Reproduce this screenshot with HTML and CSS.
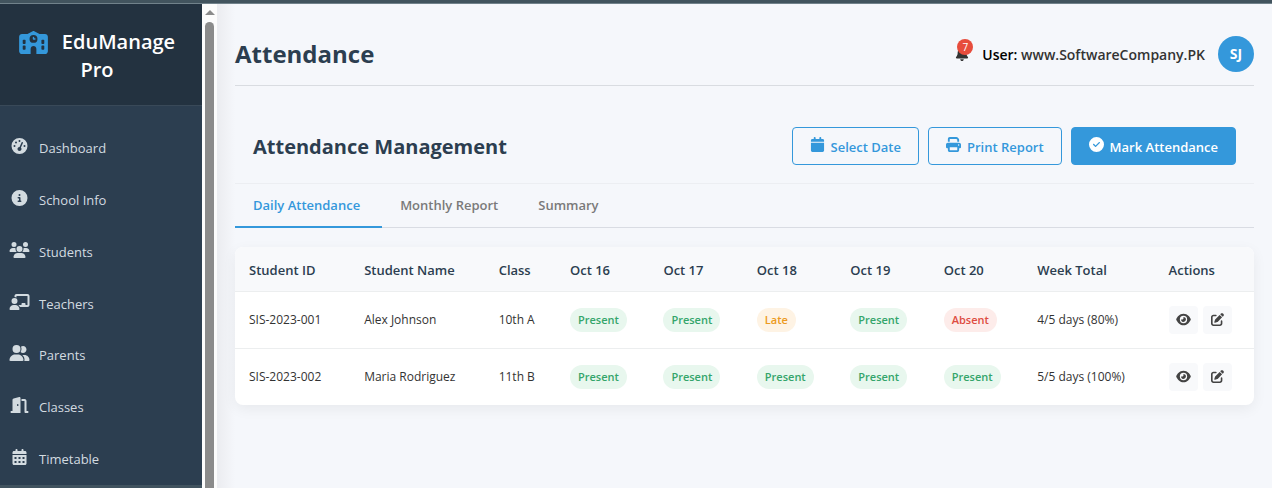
FILE: index.html
```html
<!DOCTYPE html>
<html lang="en">
<head>
<meta charset="utf-8">
<meta name="viewport" content="width=device-width, initial-scale=1">
<title>EduManage Pro - Attendance</title>
<link rel="stylesheet" href="styles.css">
</head>
<body>
<svg class="sprite" aria-hidden="true">
  <symbol id="i-school" viewBox="0 0 640 512"><path fill-rule="evenodd" d="M337.8 5.400C327-1.800 313-1.800 302.200 5.400L186 64H64C29 64 0 93 0 128V448c0 35 29 64 64 64H256V400c0-35.300 28.700-64 64-64s64 28.700 64 64V512H576c35 0 64-29 64-64V128c0-35-29-64-64-64H454L337.800 5.400zM96 192h32c8.800 0 16 7.200 16 16v64c0 8.800-7.200 16-16 16H96c-8.800 0-16-7.200-16-16V208c0-8.800 7.200-16 16-16zM512 192h32c8.800 0 16 7.200 16 16v64c0 8.800-7.200 16-16 16H512c-8.800 0-16-7.200-16-16V208c0-8.800 7.200-16 16-16zM96 320h32c8.800 0 16 7.200 16 16v64c0 8.800-7.200 16-16 16H96c-8.800 0-16-7.200-16-16V336c0-8.800 7.200-16 16-16zM512 320h32c8.800 0 16 7.200 16 16v64c0 8.800-7.200 16-16 16H512c-8.800 0-16-7.200-16-16V336c0-8.800 7.200-16 16-16zM232 176a88 88 0 1 1 176 0 88 88 0 1 1-176 0zm88-48c-8.800 0-16 7.200-16 16v32c0 8.800 7.200 16 16 16h32c8.800 0 16-7.200 16-16s-7.200-16-16-16H336V144c0-8.800-7.200-16-16-16z"/></symbol>
  <symbol id="i-gauge" viewBox="0 0 512 512"><path fill-rule="evenodd" d="M0 256a256 256 0 1 1 512 0A256 256 0 1 1 0 256zM256 64a32 32 0 1 1 0 64 32 32 0 1 1 0-64zM144 112a32 32 0 1 1 0 64 32 32 0 1 1 0-64zM96 224a32 32 0 1 1 0 64 32 32 0 1 1 0-64zM416 224a32 32 0 1 1 0 64 32 32 0 1 1 0-64zM256 416c35.300 0 64-28.700 64-64 0-17.400-6.900-33.100-18.100-44.600L366 161.700c5.300-12.100-.2-26.300-12.300-31.600s-26.300.2-31.600 12.300L257.900 288H256c-35.300 0-64 28.700-64 64s28.700 64 64 64z"/></symbol>
  <symbol id="i-info" viewBox="0 0 512 512"><path fill-rule="evenodd" d="M256 512A256 256 0 1 0 256 0a256 256 0 1 0 0 512zM216 336h24V272H216c-13.300 0-24-10.700-24-24s10.700-24 24-24h48c13.300 0 24 10.700 24 24v88h8c13.300 0 24 10.700 24 24s-10.700 24-24 24H216c-13.300 0-24-10.700-24-24s10.700-24 24-24zm40-208a32 32 0 1 1 0 64 32 32 0 1 1 0-64z"/></symbol>
  <symbol id="i-users" viewBox="0 0 640 512"><path d="M144 0a80 80 0 1 1 0 160A80 80 0 1 1 144 0zM512 0a80 80 0 1 1 0 160A80 80 0 1 1 512 0zM0 298.700C0 239.800 47.800 192 106.700 192h42.700c15.900 0 31 3.500 44.600 9.700c-1.300 7.200-1.900 14.700-1.900 22.300c0 38.200 16.800 72.500 43.300 96H21.300C9.600 320 0 310.400 0 298.700zM405.300 320h-.7c26.600-23.500 43.300-57.800 43.300-96c0-7.600-.7-15-1.900-22.300c13.600-6.300 28.700-9.700 44.600-9.700h42.700C592.200 192 640 239.800 640 298.700c0 11.800-9.600 21.300-21.300 21.300H405.300zM224 224a96 96 0 1 1 192 0 96 96 0 1 1-192 0zM128 485.300C128 411.700 187.700 352 261.300 352H378.700C452.300 352 512 411.700 512 485.300c0 14.700-11.900 26.700-26.700 26.700H154.700c-14.700 0-26.700-11.900-26.700-26.700z"/></symbol>
  <symbol id="i-teacher" viewBox="0 0 640 512"><path d="M160 64c0-35.300 28.700-64 64-64H576c35.300 0 64 28.700 64 64V352c0 35.300-28.700 64-64 64H336.800c-11.800-25.500-29.900-47.500-52.400-64H384V320c0-17.700 14.300-32 32-32h64c17.700 0 32 14.300 32 32v32h64V64H224v49.100C205.200 102.200 183.300 96 160 96V64zm0 64a96 96 0 1 1 0 192 96 96 0 1 1 0-192zM133.300 352h53.300C260.300 352 320 411.700 320 485.300c0 14.700-11.900 26.700-26.700 26.700H26.700C11.900 512 0 500.100 0 485.300C0 411.700 59.700 352 133.300 352z"/></symbol>
  <symbol id="i-parents" viewBox="0 0 640 512"><path d="M96 128a128 128 0 1 1 256 0A128 128 0 1 1 96 128zM0 482.300C0 383.800 79.800 304 178.300 304h91.400C368.200 304 448 383.800 448 482.300c0 16.400-13.300 29.700-29.700 29.700H29.700C13.300 512 0 498.700 0 482.300zM609.300 512H471.400c5.400-9.400 8.600-20.300 8.600-32v-8c0-60.700-27.100-115.200-69.800-151.800c2.400-.1 4.700-.2 7.100-.2h61.400C567.800 320 640 392.200 640 481.300c0 17-13.800 30.700-30.700 30.700zM432 256c-31 0-59-12.600-79.300-32.900C372.400 196.500 384 163.600 384 128c0-26.800-6.600-52.100-18.300-74.300C384.300 40.100 407.200 32 432 32c61.900 0 112 50.100 112 112s-50.100 112-112 112z"/></symbol>
  <symbol id="i-door" viewBox="0 0 576 512"><path fill-rule="evenodd" d="M320 32c0-9.900-4.500-19.200-12.300-25.200S289.800-1.400 280.200 1l-179.900 45C79 51.300 64 70.500 64 92.500V448H32c-17.700 0-32 14.300-32 32s14.300 32 32 32H320V32zM256 256c0 17.700-10.700 32-24 32s-24-14.300-24-32s10.700-32 24-32s24 14.300 24 32zM352 64v64h96V480c0 17.700 14.300 32 32 32h64c17.700 0 32-14.300 32-32s-14.300-32-32-32H512V128c0-35.300-28.700-64-64-64H352z"/></symbol>
  <symbol id="i-days" viewBox="0 0 448 512"><path fill-rule="evenodd" d="M96 32V64H48C21.500 64 0 85.500 0 112v48H448V112c0-26.500-21.500-48-48-48H352V32c0-17.700-14.300-32-32-32s-32 14.300-32 32V64H160V32c0-17.700-14.300-32-32-32S96 14.300 96 32zM448 192H0V464c0 26.500 21.500 48 48 48H400c26.500 0 48-21.500 48-48V192zM64 256h64v64H64zM192 256h64v64h-64zM320 256h64v64h-64zM64 384h64v64H64zM192 384h64v64h-64zM320 384h64v64h-64z"/></symbol>
  <symbol id="i-calendar" viewBox="0 0 448 512"><path d="M96 32V64H48C21.500 64 0 85.500 0 112v48H448V112c0-26.500-21.500-48-48-48H352V32c0-17.700-14.300-32-32-32s-32 14.300-32 32V64H160V32c0-17.700-14.300-32-32-32S96 14.300 96 32zM448 192H0V464c0 26.500 21.500 48 48 48H400c26.500 0 48-21.500 48-48V192z"/></symbol>
  <symbol id="i-print" viewBox="0 0 512 512"><path fill-rule="evenodd" d="M128 0C92.700 0 64 28.700 64 64v96h64V64H354.700L384 93.300V160h64V93.300c0-17-6.700-33.300-18.700-45.300L400 18.700C388 6.700 371.700 0 354.700 0H128zM384 352v96H128V352H384zm64 32h32c17.700 0 32-14.300 32-32V256c0-35.300-28.700-64-64-64H64c-35.300 0-64 28.700-64 64v96c0 17.700 14.300 32 32 32H64v64c0 35.300 28.700 64 64 64H384c35.300 0 64-28.700 64-64V384zM432 248a24 24 0 1 1 0 48 24 24 0 1 1 0-48z"/></symbol>
  <symbol id="i-check" viewBox="0 0 512 512"><path fill-rule="evenodd" d="M256 512A256 256 0 1 0 256 0a256 256 0 1 0 0 512zM369 209L241 337c-9.400 9.400-24.600 9.400-33.900 0l-64-64c-9.400-9.400-9.400-24.600 0-33.900s24.600-9.400 33.900 0l47 47L335 175c9.400-9.400 24.600-9.400 33.900 0s9.400 24.600 0 33.900z"/></symbol>
  <symbol id="i-bell" viewBox="0 0 448 512"><path d="M224 0c-17.700 0-32 14.300-32 32V51.200C119 66 64 130.600 64 208v18.800c0 47-17.300 92.400-48.500 127.600l-7.400 8.300c-8.400 9.400-10.400 22.900-5.300 34.400S19.400 416 32 416H416c12.600 0 24-7.400 29.200-18.900s3.100-25-5.300-34.400l-7.400-8.300C401.300 319.200 384 273.900 384 226.800V208c0-77.400-55-142-128-156.800V32c0-17.700-14.300-32-32-32zm45.300 493.300c12-12 18.700-28.300 18.700-45.300H160c0 17 6.700 33.300 18.700 45.300s28.300 18.700 45.300 18.700s33.300-6.700 45.300-18.700z"/></symbol>
  <symbol id="i-eye" viewBox="0 0 576 512"><path fill-rule="evenodd" d="M288 32c-80.800 0-145.500 36.800-192.600 80.600C48.600 156 17.300 208 2.500 243.700c-3.300 7.900-3.300 16.700 0 24.600C17.300 304 48.600 356 95.400 399.400C142.500 443.200 207.200 480 288 480s145.500-36.800 192.600-80.600c46.800-43.500 78.100-95.400 93-131.100c3.300-7.900 3.300-16.700 0-24.600c-14.900-35.700-46.200-87.700-93-131.100C433.500 68.800 368.800 32 288 32zM144 256a144 144 0 1 1 288 0 144 144 0 1 1-288 0zm144-64c0 35.300-28.700 64-64 64c-7.100 0-13.900-1.200-20.300-3.300c-5.500-1.800-11.900 1.600-11.700 7.400c.3 6.900 1.300 13.800 3.200 20.700c13.700 51.200 66.400 81.600 117.600 67.900s81.600-66.400 67.900-117.600c-11.100-41.500-47.800-69.400-88.600-71.100c-5.800-.2-9.200 6.100-7.400 11.700c2.100 6.400 3.300 13.200 3.300 20.300z"/></symbol>
  <symbol id="i-edit" viewBox="0 0 512 512"><path d="M471.600 21.700c-21.900-21.900-57.300-21.900-79.200 0L362.300 51.700l97.900 97.900 30.100-30.100c21.900-21.900 21.900-57.300 0-79.200L471.600 21.700zm-299.200 220c-6.100 6.100-10.800 13.600-13.500 21.900l-29.600 88.800c-2.900 8.600-.6 18.100 5.800 24.600s15.900 8.700 24.600 5.800l88.800-29.600c8.200-2.700 15.700-7.400 21.900-13.500L437.700 172.300 339.700 74.300 172.400 241.700zM96 64C43 64 0 107 0 160V416c0 53 43 96 96 96H352c53 0 96-43 96-96V320c0-17.700-14.300-32-32-32s-32 14.300-32 32v96c0 17.700-14.300 32-32 32H96c-17.700 0-32-14.300-32-32V160c0-17.700 14.300-32 32-32h96c17.700 0 32-14.300 32-32s-14.300-32-32-32H96z"/></symbol>
</svg>

<div class="topbar"></div>
<div class="app">
  <aside class="sidebar">
    <div class="brand"><svg class="brand-icon" aria-hidden="true"><use href="#i-school"/></svg>EduManage Pro</div>
    <nav class="menu">
      <a class="menu-link" href="#dashboard"><svg class="icon" aria-hidden="true"><use href="#i-gauge"/></svg>Dashboard</a>
      <a class="menu-link" href="#school"><svg class="icon" aria-hidden="true"><use href="#i-info"/></svg>School Info</a>
      <a class="menu-link" href="#students"><svg class="icon" aria-hidden="true"><use href="#i-users"/></svg>Students</a>
      <a class="menu-link" href="#teachers"><svg class="icon" aria-hidden="true"><use href="#i-teacher"/></svg>Teachers</a>
      <a class="menu-link" href="#parents"><svg class="icon" aria-hidden="true"><use href="#i-parents"/></svg>Parents</a>
      <a class="menu-link" href="#classes"><svg class="icon" aria-hidden="true"><use href="#i-door"/></svg>Classes</a>
      <a class="menu-link" href="#timetable"><svg class="icon" aria-hidden="true"><use href="#i-days"/></svg>Timetable</a>
    </nav>
  </aside>
  <div class="scrollbar" aria-hidden="true"><div class="scroll-arrow"></div><div class="scroll-thumb"></div></div>
  <main class="main">
    <header class="page-header">
      <h1 class="page-title">Attendance</h1>
      <div class="user">
        <button class="bell" type="button" aria-label="Notifications"><svg class="bell-icon" aria-hidden="true"><use href="#i-bell"/></svg><span class="bell-count">7</span></button>
        <div class="user-name"><span class="user-label">User:</span> www.SoftwareCompany.PK</div>
        <div class="avatar">SJ</div>
      </div>
    </header>
    <div class="section-header">
      <h2 class="section-title">Attendance Management</h2>
      <div class="actions">
        <button class="btn" type="button"><svg class="btn-icon" aria-hidden="true"><use href="#i-calendar"/></svg>Select Date</button>
        <button class="btn" type="button"><svg class="btn-icon" aria-hidden="true"><use href="#i-print"/></svg>Print Report</button>
        <button class="btn btn-primary" type="button"><svg class="btn-icon" aria-hidden="true"><use href="#i-check"/></svg>Mark Attendance</button>
      </div>
    </div>
    <div class="tabs" role="tablist">
      <button class="tab tab-active" type="button" role="tab" aria-selected="true">Daily Attendance</button>
      <button class="tab" type="button" role="tab" aria-selected="false">Monthly Report</button>
      <button class="tab" type="button" role="tab" aria-selected="false">Summary</button>
    </div>
    <div class="card">
      <table class="table">
        <colgroup><col class="col-id"><col class="col-name"><col class="col-class"><col class="col-day"><col class="col-day"><col class="col-day"><col class="col-day"><col class="col-day"><col class="col-total"><col></colgroup>
        <thead>
          <tr><th>Student ID</th><th>Student Name</th><th>Class</th><th>Oct 16</th><th>Oct 17</th><th>Oct 18</th><th>Oct 19</th><th>Oct 20</th><th>Week Total</th><th>Actions</th></tr>
        </thead>
        <tbody>
          <tr>
            <td>SIS-2023-001</td><td>Alex Johnson</td><td>10th A</td>
            <td><span class="badge present">Present</span></td><td><span class="badge present">Present</span></td><td><span class="badge late">Late</span></td><td><span class="badge present">Present</span></td><td><span class="badge absent">Absent</span></td>
            <td>4/5 days (80%)</td>
            <td><div class="row-actions"><button class="icon-btn" type="button" aria-label="View"><svg class="row-icon" aria-hidden="true"><use href="#i-eye"/></svg></button><button class="icon-btn" type="button" aria-label="Edit"><svg class="row-icon" aria-hidden="true"><use href="#i-edit"/></svg></button></div></td>
          </tr>
          <tr>
            <td>SIS-2023-002</td><td>Maria Rodriguez</td><td>11th B</td>
            <td><span class="badge present">Present</span></td><td><span class="badge present">Present</span></td><td><span class="badge present">Present</span></td><td><span class="badge present">Present</span></td><td><span class="badge present">Present</span></td>
            <td>5/5 days (100%)</td>
            <td><div class="row-actions"><button class="icon-btn" type="button" aria-label="View"><svg class="row-icon" aria-hidden="true"><use href="#i-eye"/></svg></button><button class="icon-btn" type="button" aria-label="Edit"><svg class="row-icon" aria-hidden="true"><use href="#i-edit"/></svg></button></div></td>
          </tr>
        </tbody>
      </table>
    </div>
  </main>
</div>
</body>
</html>
```

FILE: styles.css
```css
* { box-sizing: border-box; }

body {
  margin: 0;
  min-height: 100vh;
  display: flex;
  flex-direction: column;
  background: #f5f7fb;
  color: #333;
  font-family: "Segoe UI", "Open Sans", "Noto Sans", sans-serif;
  font-size: 12px;
}

button { font: inherit; color: inherit; border: 0; background: none; padding: 0; cursor: pointer; }
svg { fill: currentColor; flex: none; }
.sprite { position: absolute; width: 0; height: 0; }

.topbar { height: 4px; background: #42545e; border-bottom: 1px solid #71828b; }
.app { flex: 1; display: flex; }

/* Sidebar */
.sidebar {
  flex: 0 0 202px;
  display: flex;
  flex-direction: column;
  background: #2c3e50;
  border-bottom: 3px solid #41535f;
}
.brand {
  padding: 24px 15px 21px 7px;
  background: #233240;
  border-bottom: 1px solid #394958;
  color: #fff;
  font-size: 20px;
  font-weight: 600;
  line-height: 28px;
  text-align: center;
}
.brand-icon { width: 29px; height: 23px; margin-right: 14px; color: #3498db; vertical-align: -5px; }
.menu { flex: 1; display: flex; flex-direction: column; padding-top: 16px; }
.menu-link {
  flex: 1;
  display: flex;
  align-items: center;
  gap: 9px;
  min-height: 44px;
  padding-left: 9px;
  color: #d3dbe0;
  font-size: 13px;
  text-decoration: none;
}
.icon { width: 21px; height: 16px; margin-bottom: 4px; }

.scrollbar {
  flex: 0 0 15px;
  display: flex;
  flex-direction: column;
  align-items: center;
  gap: 7px;
  padding-top: 6px;
  background: #fcfcfc;
}
.scroll-arrow { border: 5px solid transparent; border-top: 0; border-bottom-color: #8b8b8b; }
.scroll-thumb { flex: 1; width: 9px; border-radius: 5px 5px 0 0; background: #8b8b8b; }

/* Main area */
.main {
  flex: 1;
  min-width: 0;
  padding: 14px 18px;
  background: linear-gradient(90deg, #ebecf0, #f5f7fb 18px);
}
.page-header {
  display: flex;
  align-items: center;
  justify-content: space-between;
  padding: 18px 0 13px;
  border-bottom: 1px solid #d9dce1;
}
.page-title { margin: 0; color: #2c3e50; font-size: 24px; font-weight: 700; line-height: 36px; }
.user { display: flex; align-items: center; gap: 13px; }
.user-name { font-size: 14px; font-weight: 600; }
.user-label { color: #000; }
.bell { position: relative; width: 14px; height: 14px; color: #333; }
.bell-icon { display: block; width: 14px; height: 14px; }
.bell-count {
  position: absolute;
  top: -8px;
  right: -4px;
  width: 16px;
  height: 16px;
  border-radius: 50%;
  background: #e74c3c;
  color: #fff;
  font-size: 10px;
  line-height: 16px;
  text-align: center;
}
.avatar {
  width: 36px;
  height: 36px;
  border-radius: 50%;
  background: #3498db;
  color: #fff;
  font-size: 14px;
  font-weight: 700;
  line-height: 36px;
  text-align: center;
}

.section-header {
  display: flex;
  align-items: center;
  justify-content: space-between;
  margin-top: 23px;
  padding: 18px;
  border-bottom: 1px solid #eceef2;
}
.section-title { margin: 0; padding-top: 2px; color: #2c3e50; font-size: 20px; font-weight: 700; line-height: 36px; }
.actions { display: flex; gap: 9px; }
.btn {
  display: flex;
  align-items: center;
  gap: 6px;
  height: 38px;
  padding: 1px 17px 0;
  border: 1px solid #3498db;
  border-radius: 4px;
  color: #3498db;
  font-size: 13px;
  font-weight: 600;
}
.btn-primary { background: #3498db; color: #fff; }
.btn-icon { width: 15px; height: 15px; margin-bottom: 4px; }

.tabs { display: flex; margin-bottom: 19px; border-bottom: 1px solid #d9dce3; }
.tab {
  height: 44px;
  margin-bottom: -1px;
  padding: 0 22px 0 18px;
  border-bottom: 2px solid transparent;
  color: #7a7a7a;
  font-size: 13px;
  font-weight: 600;
}
.tab-active { border-bottom-color: #3498db; color: #3498db; }

/* Attendance table */
.card {
  overflow: hidden;
  border-radius: 8px;
  background: #fff;
  box-shadow: 0 4px 14px rgba(0, 0, 0, 0.06);
}
.table { width: 100%; border-collapse: collapse; table-layout: fixed; }
.col-id { width: 11.3%; }
.col-name { width: 13.2%; }
.col-class { width: 7%; }
.col-day { width: 9.17%; }
.col-total { width: 12.9%; }
.table th, .table td { padding: 0 0 0 14px; text-align: left; white-space: nowrap; }
.table th { height: 44px; padding-top: 2px; background: #f8f9fb; color: #2c3e50; font-size: 13px; font-weight: 600; }
.table td { height: 57px; }
.table tr { border-bottom: 1px solid #eceeef; }
.table tbody tr:last-child { border-bottom: 0; }
.badge {
  display: inline-block;
  padding: 0 8px;
  border-radius: 12px;
  font-size: 11px;
  font-weight: 600;
  line-height: 24px;
}
.present { background: #e8f7ee; color: #34a56b; }
.late { background: #fef3e4; color: #ec9a21; }
.absent { background: #fdecea; color: #de4c42; }
.row-actions { display: flex; gap: 5px; }
.icon-btn {
  display: grid;
  place-items: center;
  width: 29px;
  height: 28px;
  border-radius: 4px;
  background: #f8f9fb;
  color: #444;
}
.row-icon { width: 15px; height: 13px; }
```
